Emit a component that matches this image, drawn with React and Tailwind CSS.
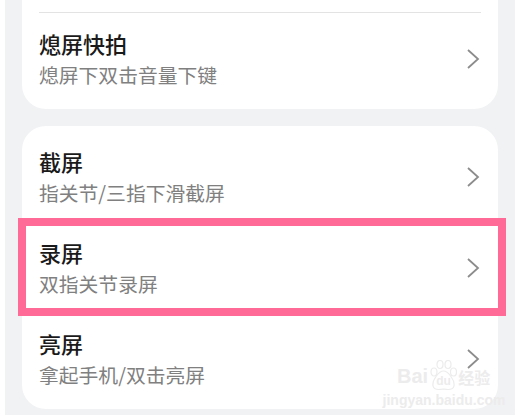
const font = { cjk: 'font-["Noto_Sans_CJK_SC","Noto_Sans",sans-serif]' };

function Chevron() {
  return (
    <svg width="14" height="22" viewBox="0 0 14 22" fill="none" className="shrink-0">
      <path d="M2 2 L12 11 L2 20" stroke="#8c8c8c" strokeWidth="1.8" />
    </svg>
  );
}

function Row({ title, sub, highlight }) {
  return (
    <div className="relative flex h-[91px] items-center justify-between pl-[17px] pr-[18px]">
      <div className="flex flex-col">
        <span className="text-[22px] leading-[30px] font-medium text-[#1a1a1a]">{title}</span>
        <span className="text-[19.8px] leading-[30px] text-[#808080] mt-[2px]">{sub}</span>
      </div>
      <Chevron />
      {highlight && (
        <div className="absolute -left-1 -right-2 -top-[4px] -bottom-[3px] border-8 border-[#ff6a96]" />
      )}
    </div>
  );
}

function Watermark() {
  return (
    <div className="absolute left-[397px] top-[360px] flex w-[94px] flex-col items-center font-['Liberation_Sans',sans-serif] text-[#ececec]">
      <div className="flex w-full items-end">
        <span className="text-[20px] leading-[29px] font-bold">Bai</span>
        <div className="relative ml-[2px] h-[31px] w-[27px] shrink-0">
          <svg width="27" height="31" viewBox="0 0 27 31" fill="none" stroke="#ececec" strokeWidth="1.2">
            <ellipse cx="4" cy="12" rx="3" ry="4" />
            <ellipse cx="10" cy="4.5" rx="3" ry="4" />
            <ellipse cx="18" cy="4.5" rx="3" ry="4" />
            <ellipse cx="23.5" cy="12" rx="3" ry="4" />
            <path d="M13.5 11 C9 11 2 20 3 26 C4 31 10 29.5 13.5 29 C17 29.5 23 31 24 26 C25 20 18 11 13.5 11 Z" />
          </svg>
          <span className="absolute inset-x-0 bottom-[3px] text-center text-[12px] leading-[14px] font-bold">du</span>
        </div>
        <span className="ml-px text-[16px] leading-[28px] font-bold font-['Noto_Sans_CJK_SC',sans-serif]">经验</span>
      </div>
      <span className="mt-[2px] whitespace-nowrap text-[14px] leading-[15px] font-bold">jingyan.baidu.com</span>
    </div>
  );
}

export default function App() {
  return (
    <div className={`relative h-[416px] w-[519px] overflow-hidden bg-white pl-[5px] pr-[4px] ${font.cjk}`}>
      <div className="h-[415px] bg-[#f1f2f4] px-[17px]">
        <div className="rounded-b-[24px] bg-white pb-[5px] pt-[12px]">
          <div className="mx-[17px] h-px bg-[#e3e3e3]" />
          <Row title="熄屏快拍" sub="熄屏下双击音量下键" />
        </div>
        <div className="mt-[17px] rounded-[24px] bg-white py-[5px]">
          <Row title="截屏" sub="指关节/三指下滑截屏" />
          <Row title="录屏" sub="双指关节录屏" highlight />
          <Row title="亮屏" sub="拿起手机/双击亮屏" />
        </div>
      </div>
      <Watermark />
    </div>
  );
}
